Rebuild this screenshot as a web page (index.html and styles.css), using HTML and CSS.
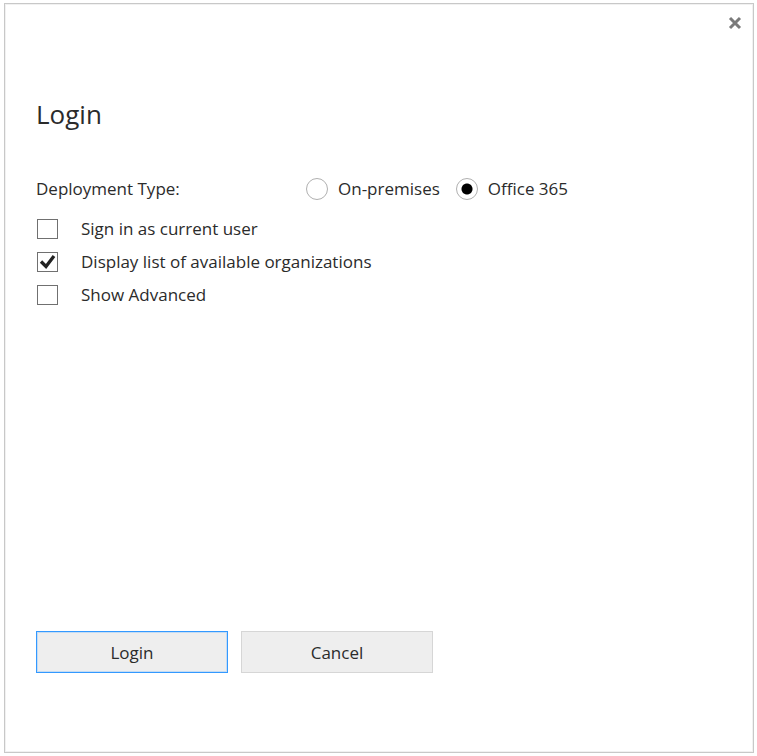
FILE: index.html
```html
<!DOCTYPE html>
<html lang="en">
<head>
<meta charset="utf-8">
<meta name="viewport" content="width=device-width, initial-scale=1">
<title>Login</title>
<link rel="stylesheet" href="styles.css">
</head>
<body>
<main class="dialog">
  <header class="titlebar">
    <button class="close" type="button" aria-label="Close">
      <svg width="14" height="14" viewBox="0 0 14 14" aria-hidden="true"><path d="M2 2 12 12M12 2 2 12" fill="none" stroke="#7a7a7a" stroke-width="3"/></svg>
    </button>
  </header>
  <form class="form">
    <h1 class="heading">Login</h1>
    <div class="deployment" role="radiogroup" aria-labelledby="deployment-label">
      <span class="deployment-label" id="deployment-label">Deployment Type:</span>
      <label class="option"><input class="radio" type="radio" name="deployment">On-premises</label>
      <label class="option"><input class="radio" type="radio" name="deployment" checked>Office 365</label>
    </div>
    <div class="checks">
      <label class="check"><input class="checkbox" type="checkbox">Sign in as current user</label>
      <label class="check">
        <span class="box">
          <input class="checkbox" type="checkbox" checked>
          <svg class="tick" viewBox="0 0 21 20" aria-hidden="true"><path d="M4 9.500 9 14.500 17 4" fill="none" stroke="#222" stroke-width="3.300"/></svg>
        </span>Display list of available organizations</label>
      <label class="check"><input class="checkbox" type="checkbox">Show Advanced</label>
    </div>
    <div class="actions">
      <button class="button primary" type="submit">Login</button>
      <button class="button" type="button">Cancel</button>
    </div>
  </form>
</main>
</body>
</html>
```
FILE: styles.css
```css
* {
  box-sizing: border-box;
}

body {
  margin: 0;
  padding: 3px 3px 3px 4px;
  min-height: 100vh;
  display: flex;
  background: #fff;
  color: #2b2b2b;
  font: 17px/24px "Segoe UI", "Open Sans", sans-serif;
}

.dialog {
  flex: 1;
  display: flex;
  flex-direction: column;
  border: 1px solid #c8c8c8;
  box-shadow: inset 0 0 0 1px #f1f1f1;
}

.titlebar {
  display: flex;
  justify-content: flex-end;
  padding: 9px 8px;
}

.close {
  display: flex;
  align-items: center;
  justify-content: center;
  width: 20px;
  height: 20px;
  padding: 0;
  border: 0;
  background: none;
}

.form {
  flex: 1;
  display: flex;
  flex-direction: column;
  padding: 54px 31px 79px;
}

.heading {
  margin: 0 0 45px;
  font-size: 26px;
  line-height: 36px;
  font-weight: 400;
}

.deployment {
  display: flex;
  gap: 16px;
  margin-bottom: 11px;
}

.deployment-label {
  width: 254px;
}

.option,
.check {
  display: flex;
  align-items: center;
}

.option {
  gap: 10px;
}

.radio,
.checkbox {
  appearance: none;
  display: block;
  flex: none;
  margin: 0;
  background: #fff;
}

.radio {
  width: 22px;
  height: 22px;
  border: 1px solid #b0b0b0;
  border-radius: 50%;
}

.radio:checked {
  background: radial-gradient(circle, #000 5px, #fff 6px);
}

.checks {
  display: flex;
  flex-direction: column;
  padding-left: 1px;
}

.check {
  gap: 23px;
  height: 33px;
}

.checkbox {
  width: 21px;
  height: 20px;
  border: 1px solid #707070;
}

.box {
  position: relative;
}

.tick {
  position: absolute;
  inset: 0;
  pointer-events: none;
}

.actions {
  display: flex;
  gap: 13px;
  margin-top: auto;
}

.button {
  width: 192px;
  height: 42px;
  padding: 2px 0 0;
  border: 1px solid #d6d6d6;
  background: #eee;
  color: inherit;
  font: inherit;
}

.primary {
  border-color: #3399ff;
  box-shadow: inset 0 0 0 1px #c5dcf3;
}
```
